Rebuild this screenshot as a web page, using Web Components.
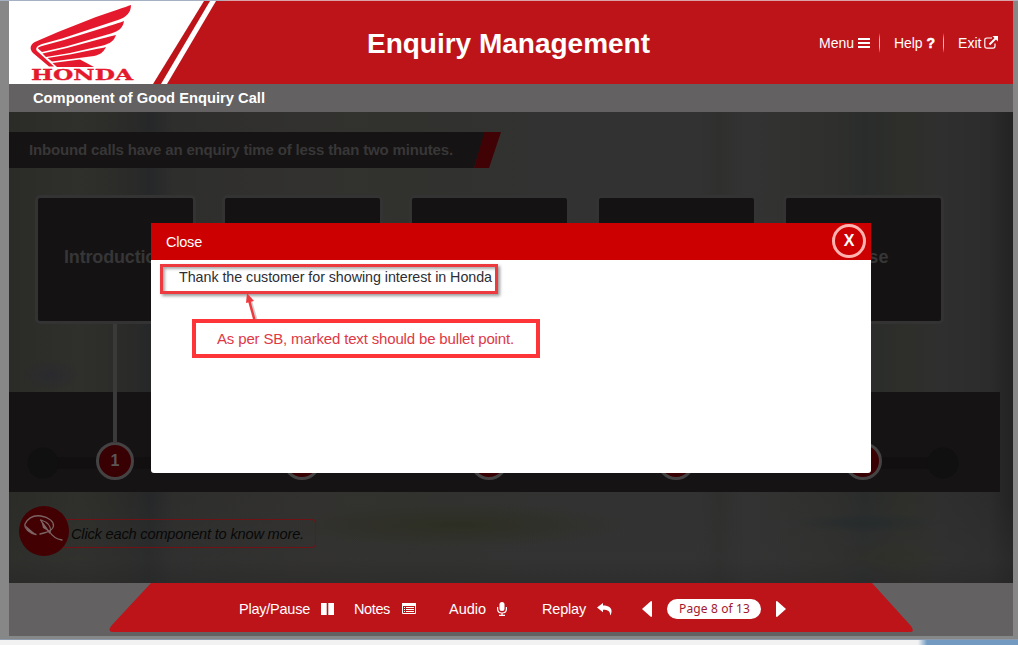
<!DOCTYPE html>
<html lang="en">
<head>
<meta charset="utf-8">
<title>Enquiry Management</title>
<style>
html,body{margin:0;height:100%;overflow:hidden}
body{font-family:"Liberation Sans",Arial,sans-serif;background:#868786}
</style>
</head>
<body>
<course-player></course-player>
<script>
const define = (name, html, after) => {
  const t = document.createElement('template');
  t.innerHTML = html;
  customElements.define(name, class extends HTMLElement {
    connectedCallback() {
      if (this.shadowRoot) return;
      this.attachShadow({mode: 'open'}).appendChild(document.importNode(t.content, true));
      if (after) after(this, this.shadowRoot);
    }
  });
};

/* A single line of text whose tracking is adjusted to fill the given width. */
define('text-run', `<style>:host{display:inline-block;white-space:nowrap;flex:none}span{display:inline-block}</style><span><slot></slot></span>`,
  (host, root) => {
    const span = root.querySelector('span');
    const target = parseFloat(host.getAttribute('width'));
    const n = host.textContent.length;
    span.style.letterSpacing = ((target - span.getBoundingClientRect().width) / n) + 'px';
    host.style.width = target + 'px';
  });

define('honda-logo', `
<style>:host{display:block;flex:none;width:220px;height:83px}svg{display:block}</style>
<svg width="220" height="83" viewBox="9 1 220 83">
  <path d="M9 1H204L153 84H9Z" fill="#fff"/>
  <path d="M210 1H216L167 84H161Z" fill="#fff"/>
  <g fill="#e5192d">
    <path d="M131 5C131 12 127 17 118 20L62 38.500L42 44C37 46 35 48 37 51L54 66.500H49L33 53C29 49 30 44 36 41.500L58 32L96 17L118 9.500C124 7.500 128 6 131 5Z"/>
    <path d="M124 21C123 28 119 31 111 33.500L66 46.500L42 52L38 48.500C38 47 40 46.500 42 46L64 40L106 27C114 24.500 119 23 124 21Z"/>
    <path d="M116 35C114 41 110 43.500 103 45.500L70 53L46 57L42.500 53.500L67 48L102 38.500C108 37 112 36 116 35Z"/>
    <path d="M106 47C103 53 100 54.500 94 56L52 61.500L47.500 58L70 54.500L94 49.500C99 48.500 103 48 106 47Z"/>
    <path d="M52.500 63L80 59.500L94 67H57Z"/>
  </g>
  <text x="31" y="79.700" textLength="102" lengthAdjust="spacingAndGlyphs" font-family="DejaVu Serif, serif" font-weight="bold" font-size="14.500" fill="#e5192d" stroke="#e5192d" stroke-width=".3">HONDA</text>
</svg>`);

define('top-nav', `
<style>
:host{display:flex;align-items:center;height:20px;color:#fff;font-size:14px;line-height:20px;flex:none}
i{display:block;width:1px;height:20px;background:linear-gradient(#c8102000,#f5b3b5 30%,#f5b3b5 70%,#c8102000);flex:none}
svg{display:block;flex:none}
b{font-size:14px;line-height:20px;width:9px;margin-left:4px;-webkit-text-stroke:.5px #fff}
</style>
<text-run width="35">Menu</text-run>
<svg width="12" height="12" style="margin-left:4px"><path d="M0 2H12M0 6H12M0 10H12" stroke="#fff" stroke-width="2"/></svg>
<i style="margin:0 14px 0 9px"></i>
<text-run width="28.500">Help</text-run><b>?</b>
<i style="margin:0 14px 0 7.500px"></i>
<text-run width="23.500">Exit</text-run>
<svg width="14" height="13" style="margin:-2px 0 0 2.500px" viewBox="0 0 14 13"><path d="M8 2H3Q.8 2 .8 4V10Q.8 12.200 3 12.200H9Q11 12.200 11 10V7.500" fill="none" stroke="#fff" stroke-width="1.200"/><path d="M5.500 8.500L12 2" stroke="#fff" stroke-width="2"/><path d="M8.500 0H14V5.500Z" fill="#fff"/></svg>`);

define('course-header', `
<style>
:host{display:block}
header{display:flex;height:83px;background:#bd141a}
h1{margin:0 0 0 138px;font-size:28px;line-height:32px;padding-top:27px;height:32px;color:#fff}
top-nav{margin:32px 0 0 169px}
.sub{height:28px;box-sizing:border-box;padding:4px 0 0 24px;background:#636162;color:#fff;font:bold 14.700px/20px "Liberation Sans",Arial,sans-serif}
</style>
<header><honda-logo></honda-logo><h1><text-run width="283">Enquiry Management</text-run></h1><top-nav></top-nav></header>
<div class="sub"><text-run width="232">Component of Good Enquiry Call</text-run></div>`);

define('info-banner', `
<style>
:host{display:block;width:492px;height:36px;position:relative}
svg{position:absolute;left:0;top:0}
div{position:relative;padding:8px 0 0 20px;font:bold 15px/20px "Liberation Sans",Arial,sans-serif;color:#383738}
</style>
<svg width="492" height="36"><path d="M0 0H476L465 36H0Z" fill="#151313"/><path d="M475.500 0H492L480 36H465Z" fill="#400204"/></svg>
<div><text-run width="424">Inbound calls have an enquiry time of less than two minutes.</text-run></div>`);

define('step-card', `
<style>
:host{display:flex;box-sizing:border-box;width:161px;height:129px;border:3px solid #333;border-radius:5px;background:#141213;align-items:center;justify-content:center;color:#363637;font:bold 18px/14px "Liberation Sans",Arial,sans-serif}
div{margin-top:-5px}
</style><div><slot></slot></div>`);

define('step-node', `
<style>
:host{display:block;position:relative;width:38px;height:38px}
div{box-sizing:border-box;width:38px;height:38px;border:3px solid #454243;border-radius:50%;background:#380003;color:#5c5556;font:bold 16px/32px "Liberation Sans",Arial,sans-serif;text-align:center}
i{position:absolute;left:17px;bottom:37px;width:4px;height:119px;background:#3a3a3a}
</style><i></i><div><slot></slot></div>`);

define('step-track', `
<style>
:host{display:block;width:991px;height:100px;background:#151314}
.in{position:relative;display:flex;gap:149px;padding:50px 0 0 87px}
svg{position:absolute;left:0;top:49px}
step-node{flex:none}
</style>
<div class="in"><svg width="991" height="44"><path d="M34 22H934" stroke="#110f10" stroke-width="12"/><circle cx="34" cy="22" r="15.500" fill="#111011"/><circle cx="934" cy="22" r="15.500" fill="#111011"/></svg>
<step-node>1</step-node><step-node>2</step-node><step-node>3</step-node><step-node>4</step-node><step-node>5</step-node></div>`);

define('click-hint', `
<style>
:host{display:flex;align-items:center;height:50px}
svg{flex:none;position:relative}
.box{box-sizing:border-box;width:272px;height:29px;margin:4px 0 0 -25px;padding-left:26px;border:1px solid #701215;border-radius:4px;font:italic 14.600px/28px "Liberation Sans",Arial,sans-serif;color:#080808}
</style>
<svg width="50" height="50"><circle cx="25" cy="25" r="25" fill="#420002"/><g fill="none" stroke="#7c6465" stroke-width="1.300" stroke-linecap="round"><path d="M17 28.500C10 27 5 22 6 18C9 12 15 9 22 10C30 11 35 16 34.500 20C34 24 29 26 25 27L21 28"/><path d="M21.500 14L30.500 27M22 14C28 16 32 20 31.500 25M30 25C33 30 37 33 43 34"/></g><path d="M6 19L17 28.500L9 25.500ZM22 14L31 26L24 22Z" fill="#7c6465"/></svg>
<div class="box"><text-run width="233">Click each component to know more.</text-run></div>`);

define('course-scene', `
<style>
:host{display:block;height:471px;box-sizing:border-box;padding-top:20px;background:
 radial-gradient(ellipse 170px 22px at 450px 413px,#2d2e22,#2d2e2200),
 radial-gradient(ellipse 75px 10px at 857px 411px,#262b2c,#262b2c00),
 radial-gradient(ellipse 60px 16px at 880px 445px,#30302588,#30302500),
 radial-gradient(ellipse 30px 16px at 41px 263px,#2a2a2f,#2a2a2f00),
 linear-gradient(#0000 82%,#33333366 95%,#2a2a2a88),
 linear-gradient(90deg,#2b2c27 0,#2f302b 70px,#2b2c29 115px,#262728 140px,#2e2e2d 165px,#32312f 300px,#31322e 400px,#323232 560px,#323232 690px,#2f2f2e 710px,#333 735px,#2f302d 825px,#2a2c2c 855px,#2e2f2a 895px,#2f2f2f 930px,#2c2c2c 980px,#222 1004px)}
.cards{display:flex;gap:26px;padding:27px 0 0 26px}
step-card{flex:none}
step-track{margin-top:68px}
click-hint{margin:14px 0 0 10px}
</style>
<info-banner></info-banner>
<div class="cards"><step-card><text-run width="103">Introduction</text-run></step-card><step-card></step-card><step-card></step-card><step-card></step-card><step-card><text-run width="51">Close</text-run></step-card></div>
<step-track></step-track>
<click-hint></click-hint>`);

define('review-note', `
<style>
:host{display:block;width:380px}
.mark{box-sizing:border-box;width:338px;height:30px;border:3px solid #ed3a3e;box-shadow:2px 2px 3px #0006,inset 2px 2px 3px #0005;padding-left:16px;font-size:14.300px;line-height:21px;color:#2e2e34}
svg{display:block;margin:-1px 0 -1px 82px;position:relative}
.note{box-sizing:border-box;width:348px;height:39px;margin-left:32px;border:4px solid #fd3438;padding-left:21px;font-size:15px;line-height:31px;color:#de3945}
</style>
<div class="mark"><text-run width="313">Thank the customer for showing interest in Honda</text-run></div>
<svg width="18" height="27" viewBox="0 0 18 27"><path d="M14 27L8 6" stroke="#8886" stroke-width="3" fill="none"/><path d="M12.500 27L7 7" stroke="#ed3a3e" stroke-width="2.500" fill="none"/><path d="M5 0L12 8L4 10Z" fill="#ed3a3e"/></svg>
<div class="note"><text-run width="297">As per SB, marked text should be bullet point.</text-run></div>`);

define('pop-dialog', `
<style>
:host{display:block;width:720px;height:250px;background:#fff;border-radius:0 0 3px 3px}
header{display:flex;align-items:center;justify-content:space-between;height:37px;background:#c00;padding:0 5px 0 15px;color:#fff;font-size:14.500px;line-height:20px}
b{display:flex;align-items:center;justify-content:center;box-sizing:border-box;width:34px;height:34px;border:3px solid #ffb3b0;border-radius:50%;font-size:16px;line-height:12px;color:#fff;margin-top:-1px}
main{padding:4px 0 0 9px}
</style>
<header><text-run width="36">Close</text-run><b>X</b></header>
<main><slot></slot></main>`);

define('course-footer', `
<style>
:host{display:block;position:relative;height:53px;background:#636162}
.bg{position:absolute;left:0;top:0}
nav{position:relative;display:flex;align-items:center;height:52px;padding-left:230px;color:#fff;font-size:14.500px;line-height:20px}
svg{display:block;flex:none}
.pill{box-sizing:border-box;width:94px;height:20px;border-radius:10px;background:#fff;color:#a3182e;padding-left:12px;font:12px/20px "Noto Sans",sans-serif;margin:0 15px}
</style>
<svg class="bg" width="1004" height="53"><path d="M142 0H863L902 43Q906 49 901 49H103Q98 48 103 42Z" fill="#bd141a"/></svg>
<nav>
<text-run width="71">Play/Pause</text-run>
<svg width="13" height="12" style="margin:0 20px 0 11px"><path d="M0 0H5.700V12H0ZM7.300 0H13V12H7.300Z" fill="#fff"/></svg>
<text-run width="36">Notes</text-run>
<svg width="14" height="11" style="margin:-1px 33px 0 12px"><path d="M.5 .5H13.500V10.500H.5Z" fill="none" stroke="#fff"/><path d="M0 1.500H14" stroke="#fff" stroke-width="3"/><path d="M2 4.500H3M4 4.500H12M2 6.500H3M4 6.500H12M2 8.500H3M4 8.500H12" stroke="#fff"/></svg>
<text-run width="37">Audio</text-run>
<svg width="10" height="14" style="margin:0 35px 0 11px"><rect x="2.500" width="5" height="9" rx="2.500" fill="#fff"/><path d="M.6 5V7Q.6 11 5 11Q9.400 11 9.400 7V5M5 11V13M2 13.400H8" fill="none" stroke="#fff" stroke-width="1.200"/></svg>
<text-run width="44">Replay</text-run>
<svg width="15" height="13" style="margin:0 30px 0 11px"><path d="M0 4.500L6 0V2.500C12 2.500 15 5 14.500 9Q14.300 11 13 12.500C13.500 8.500 11 6.800 6 6.800V9.200Z" fill="#fff"/></svg>
<svg width="10" height="16"><path d="M0 8L9 0Q10 0 10 1V15Q10 16 9 16Z" fill="#fff"/></svg>
<div class="pill"><text-run width="71">Page 8 of 13</text-run></div>
<svg width="10" height="16"><path d="M10 8L1 0Q0 0 0 1V15Q0 16 1 16Z" fill="#fff"/></svg>
</nav>`);

define('course-player', `
<style>
:host{display:block;position:relative;width:1018px;height:645px;overflow:hidden;background:#868786}
.top{height:1px;background:linear-gradient(90deg,#a5b1c2 220px,#dba3a8 230px,#dba3a8 1010px,#a5b1c2)}
.course{width:1004px;margin-left:9px}
.gap{height:4px;background:linear-gradient(#868787 75%,#8d9aab 75%)}
.desk{height:5px;background:linear-gradient(90deg,#f2f2f3 918px,#739bc2 927px)}
pop-dialog{position:absolute;left:151px;top:223px}
</style>
<div class="top"></div>
<div class="course"><course-header></course-header><course-scene></course-scene><course-footer></course-footer></div>
<div class="gap"></div><div class="desk"></div>
<pop-dialog><review-note></review-note></pop-dialog>`);
</script>
</body>
</html>
